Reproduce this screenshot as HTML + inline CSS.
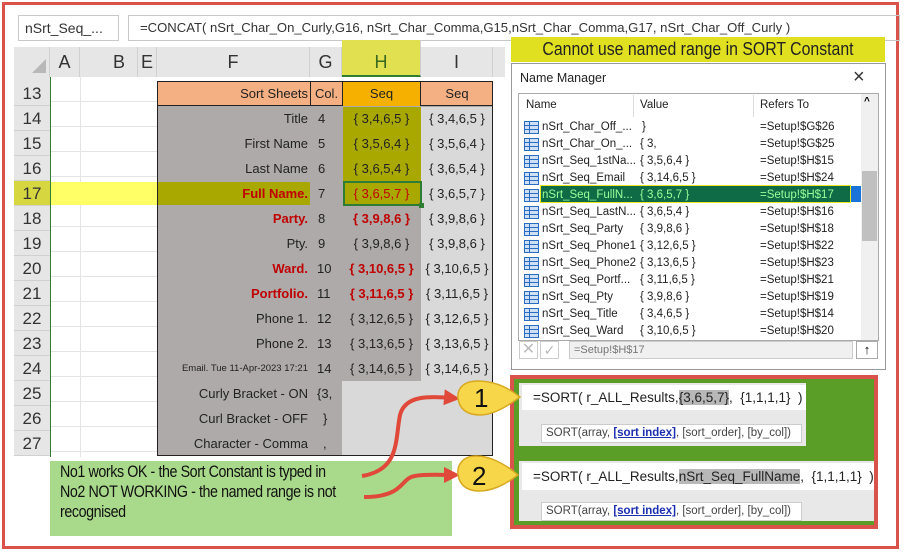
<!DOCTYPE html>
<html><head><meta charset="utf-8"><style>
*{box-sizing:border-box;margin:0;padding:0}
body{width:904px;height:553px;background:#fff;position:relative;overflow:hidden;font-family:"Liberation Sans",sans-serif}
.a{position:absolute}
.c{position:absolute;font-size:13px;color:#222;white-space:nowrap;line-height:25px}
.hd{position:absolute;top:47px;height:30px;font-size:18px;line-height:30px;text-align:center;color:#333;background:#e6e6e6;border-right:1px solid #d0d0d0}
.rn{position:absolute;left:14px;width:36px;height:25px;font-size:17px;line-height:25px;text-align:center;color:#333;background:#e6e6e6;border-bottom:1px solid #d0d0d0}
.nm{position:absolute;font-size:11.5px;color:#222;white-space:nowrap;line-height:17px}
.ic{position:absolute;left:524px;width:15px;height:13px;border:1px solid #2a6cc0;background:linear-gradient(#2a6cc0 0 0) 0 3px/100% 1px no-repeat,linear-gradient(#2a6cc0 0 0) 0 7px/100% 1px no-repeat,linear-gradient(90deg,transparent 4px,#2a6cc0 4px 5px,transparent 5px) ,#cfe0f5}
</style></head><body>
<div class="a" style="left:2px;top:2px;width:897px;height:547px;border:3px solid #d9534a"></div>

<div class="a" style="left:18px;top:15px;width:101px;height:26px;border:1px solid #c8c8c8;font-size:14px;line-height:24px;padding-left:6px;color:#333">nSrt_Seq_... <span style="font-size:8px;color:#777;margin-left:4px">▼</span></div>
<div class="a" style="left:128px;top:15px;width:772px;height:26px;border:1px solid #c8c8c8;font-size:13.1px;line-height:24px;padding-left:11px;color:#333;white-space:nowrap">=CONCAT( nSrt_Char_On_Curly,G16, nSrt_Char_Comma,G15,nSrt_Char_Comma,G17, nSrt_Char_Off_Curly )</div>

<div class="hd" style="left:14px;width:36px"><div class="a" style="right:3px;bottom:4px;width:0;height:0;border-left:14px solid transparent;border-bottom:14px solid #b8b8b8"></div></div>
<div class="hd" style="left:50px;width:30px">A</div>
<div class="hd" style="left:80px;width:58px;text-align:right;padding-right:12px">B</div>
<div class="hd" style="left:138px;width:19px">E</div>
<div class="hd" style="left:157px;width:153px">F</div>
<div class="hd" style="left:310px;width:32px">G</div>
<div class="hd" style="left:342px;width:79px;background:#e0e050;color:#3a6a20;top:40px;height:37px;line-height:44px;border-bottom:2px solid #2e7d32">H</div>
<div class="hd" style="left:421px;width:72px">I</div>
<div class="a" style="left:493px;top:47px;width:12px;height:30px;background:#e6e6e6"></div>

<div class="a" style="left:50px;top:77px;width:107px;height:380px;background:repeating-linear-gradient(transparent 0 24px,#e4e4e4 24px 25px)"></div>
<div class="a" style="left:80px;top:77px;width:1px;height:380px;background:#e4e4e4"></div>
<div class="a" style="left:50px;top:77px;width:1px;height:380px;background:#2e7d32"></div>

<div class="rn" style="top:81px">13</div><div class="rn" style="top:106px">14</div><div class="rn" style="top:131px">15</div><div class="rn" style="top:156px">16</div>
<div class="rn" style="top:181px;background:#d6d640">17</div><div class="rn" style="top:206px">18</div><div class="rn" style="top:231px">19</div><div class="rn" style="top:256px">20</div>
<div class="rn" style="top:281px">21</div><div class="rn" style="top:306px">22</div><div class="rn" style="top:331px">23</div><div class="rn" style="top:356px">24</div>
<div class="rn" style="top:381px">25</div><div class="rn" style="top:406px">26</div><div class="rn" style="top:431px">27</div>
<div class="a" style="left:14px;top:77px;width:36px;height:4px;background:#e6e6e6"></div>
<div class="a" style="left:51px;top:182px;width:106px;height:23px;background:#ffff66"></div>

<div class="a" style="left:157px;top:81px;width:336px;height:375px;background:#aeaaaa;border:1px solid #222"></div>
<div class="a" style="left:158px;top:82px;width:334px;height:24px;background:#f4b083;border-bottom:1px solid #222"></div>
<div class="a" style="left:310px;top:82px;width:1px;height:24px;background:#222"></div>
<div class="a" style="left:342px;top:82px;width:79px;height:24px;background:#f5b000;border-left:1px solid #222;border-right:1px solid #222"></div>
<div class="a" style="left:343px;top:107px;width:78px;height:98px;background:#a9a800"></div>
<div class="a" style="left:158px;top:182px;width:152px;height:23px;background:#a9a800"></div>
<div class="a" style="left:421px;top:107px;width:71px;height:348px;background:#d9d9d9"></div>
<div class="a" style="left:342px;top:381px;width:79px;height:74px;background:#d9d9d9"></div>
<div class="a" style="left:343px;top:181px;width:79px;height:25px;border:2px solid #2e7d32"></div>
<div class="a" style="left:419px;top:203px;width:5px;height:5px;background:#2e7d32"></div>

<div class="c" style="left:158px;width:150px;top:81px;text-align:right">Sort Sheets</div>
<div class="c" style="left:311px;width:31px;top:81px;text-align:center">Col.</div>
<div class="c" style="left:342px;width:79px;top:81px;text-align:center">Seq</div>
<div class="c" style="left:421px;width:72px;top:81px;text-align:center">Seq</div>

<div class="c" style="left:158px;width:150px;top:106px;text-align:right">Title</div>
<div class="c" style="left:158px;width:150px;top:131px;text-align:right">First Name</div>
<div class="c" style="left:158px;width:150px;top:156px;text-align:right">Last Name</div>
<div class="c" style="left:158px;width:150px;top:181px;text-align:right;color:#c00000;font-weight:bold">Full Name.</div>
<div class="c" style="left:158px;width:150px;top:206px;text-align:right;color:#c00000;font-weight:bold">Party.</div>
<div class="c" style="left:158px;width:150px;top:231px;text-align:right">Pty.</div>
<div class="c" style="left:158px;width:150px;top:256px;text-align:right;color:#c00000;font-weight:bold">Ward.</div>
<div class="c" style="left:158px;width:150px;top:281px;text-align:right;color:#c00000;font-weight:bold">Portfolio.</div>
<div class="c" style="left:158px;width:150px;top:306px;text-align:right">Phone 1.</div>
<div class="c" style="left:158px;width:150px;top:331px;text-align:right">Phone 2.</div>
<div class="c" style="left:158px;width:150px;top:356px;text-align:right;font-size:9.5px">Email. Tue 11-Apr-2023 17:21</div>
<div class="c" style="left:158px;width:150px;top:381px;text-align:right">Curly Bracket - ON</div>
<div class="c" style="left:158px;width:150px;top:406px;text-align:right">Curl Bracket - OFF</div>
<div class="c" style="left:158px;width:150px;top:431px;text-align:right">Character - Comma</div>
<div class="c" style="left:318px;top:106px">4</div><div class="c" style="left:318px;top:131px">5</div><div class="c" style="left:318px;top:156px">6</div>
<div class="c" style="left:318px;top:181px">7</div><div class="c" style="left:318px;top:206px">8</div><div class="c" style="left:318px;top:231px">9</div>
<div class="c" style="left:317px;top:256px">10</div><div class="c" style="left:317px;top:281px">11</div><div class="c" style="left:317px;top:306px">12</div>
<div class="c" style="left:317px;top:331px">13</div><div class="c" style="left:317px;top:356px">14</div>
<div class="c" style="left:317px;top:381px">{3,</div><div class="c" style="left:323px;top:406px">}</div><div class="c" style="left:323px;top:431px">,</div>
<div class="c" style="left:342px;width:79px;text-align:center;top:106px">{ 3,4,6,5 }</div>
<div class="c" style="left:342px;width:79px;text-align:center;top:131px">{ 3,5,6,4 }</div>
<div class="c" style="left:342px;width:79px;text-align:center;top:156px">{ 3,6,5,4 }</div>
<div class="c" style="left:342px;width:79px;text-align:center;top:181px;color:#c00000">{ 3,6,5,7 }</div>
<div class="c" style="left:342px;width:79px;text-align:center;top:206px;color:#c00000;font-weight:bold">{ 3,9,8,6 }</div>
<div class="c" style="left:342px;width:79px;text-align:center;top:231px">{ 3,9,8,6 }</div>
<div class="c" style="left:342px;width:79px;text-align:center;top:256px;color:#c00000;font-weight:bold">{ 3,10,6,5 }</div>
<div class="c" style="left:342px;width:79px;text-align:center;top:281px;color:#c00000;font-weight:bold">{ 3,11,6,5 }</div>
<div class="c" style="left:342px;width:79px;text-align:center;top:306px">{ 3,12,6,5 }</div>
<div class="c" style="left:342px;width:79px;text-align:center;top:331px">{ 3,13,6,5 }</div>
<div class="c" style="left:342px;width:79px;text-align:center;top:356px">{ 3,14,6,5 }</div>
<div class="c" style="left:421px;width:72px;text-align:center;top:106px">{ 3,4,6,5 }</div>
<div class="c" style="left:421px;width:72px;text-align:center;top:131px">{ 3,5,6,4 }</div>
<div class="c" style="left:421px;width:72px;text-align:center;top:156px">{ 3,6,5,4 }</div>
<div class="c" style="left:421px;width:72px;text-align:center;top:181px">{ 3,6,5,7 }</div>
<div class="c" style="left:421px;width:72px;text-align:center;top:206px">{ 3,9,8,6 }</div>
<div class="c" style="left:421px;width:72px;text-align:center;top:231px">{ 3,9,8,6 }</div>
<div class="c" style="left:421px;width:72px;text-align:center;top:256px">{ 3,10,6,5 }</div>
<div class="c" style="left:421px;width:72px;text-align:center;top:281px">{ 3,11,6,5 }</div>
<div class="c" style="left:421px;width:72px;text-align:center;top:306px">{ 3,12,6,5 }</div>
<div class="c" style="left:421px;width:72px;text-align:center;top:331px">{ 3,13,6,5 }</div>
<div class="c" style="left:421px;width:72px;text-align:center;top:356px">{ 3,14,6,5 }</div>

<div class="a" style="left:511px;top:37px;width:374px;height:25px;background:#e0e020"></div>
<div class="a" style="left:511px;top:37px;width:374px;height:25px;font-size:18px;line-height:25px;text-align:center;color:#222;transform:scaleX(0.88);white-space:nowrap">Cannot use named range in SORT Constant</div>

<div class="a" style="left:511px;top:63px;width:375px;height:307px;background:#fff;border:1px solid #999"></div>
<div class="a" style="left:520px;top:71px;font-size:12.5px;color:#222">Name Manager</div>
<div class="a" style="left:853px;top:66px;font-size:20px;color:#333">×</div>
<div class="a" style="left:518px;top:93px;width:361px;height:248px;border:1px solid #aaa;background:#fff"></div>
<div class="a" style="left:633px;top:95px;width:1px;height:22px;background:#ddd"></div>
<div class="a" style="left:753px;top:95px;width:1px;height:22px;background:#ddd"></div>
<div class="nm" style="left:526px;top:97px">Name</div>
<div class="nm" style="left:640px;top:97px">Value</div>
<div class="nm" style="left:760px;top:97px">Refers To</div>
<div class="a" style="left:861px;top:94px;width:17px;height:246px;background:#f0f0f0"></div>
<div class="a" style="left:862px;top:171px;width:15px;height:70px;background:#c0c0c0"></div>
<div class="a" style="left:864px;top:96px;font-size:10px;font-weight:bold">^</div>
<div class="a" style="left:540px;top:185px;width:311px;height:18px;background:#0f6b45;border:1px solid #e8e820"></div>
<div class="a" style="left:851px;top:186px;width:10px;height:16px;background:#1a73d9"></div>

<div class="ic" style="top:121px"></div><div class="nm" style="left:542px;top:119px">nSrt_Char_Off_...</div><div class="nm" style="left:642px;top:119px">}</div><div class="nm" style="left:760px;top:119px">=Setup!$G$26</div>
<div class="ic" style="top:138px"></div><div class="nm" style="left:542px;top:136px">nSrt_Char_On_...</div><div class="nm" style="left:640px;top:136px">{ 3,</div><div class="nm" style="left:760px;top:136px">=Setup!$G$25</div>
<div class="ic" style="top:155px"></div><div class="nm" style="left:542px;top:153px">nSrt_Seq_1stNa...</div><div class="nm" style="left:640px;top:153px">{ 3,5,6,4 }</div><div class="nm" style="left:760px;top:153px">=Setup!$H$15</div>
<div class="ic" style="top:172px"></div><div class="nm" style="left:542px;top:170px">nSrt_Seq_Email</div><div class="nm" style="left:640px;top:170px">{ 3,14,6,5 }</div><div class="nm" style="left:760px;top:170px">=Setup!$H$24</div>
<div class="ic" style="top:189px"></div><div class="nm" style="left:542px;top:187px;color:#9f9">nSrt_Seq_FullN...</div><div class="nm" style="left:640px;top:187px;color:#9f9">{ 3,6,5,7 }</div><div class="nm" style="left:760px;top:187px;color:#9f9">=Setup!$H$17</div>
<div class="ic" style="top:206px"></div><div class="nm" style="left:542px;top:204px">nSrt_Seq_LastN...</div><div class="nm" style="left:640px;top:204px">{ 3,6,5,4 }</div><div class="nm" style="left:760px;top:204px">=Setup!$H$16</div>
<div class="ic" style="top:223px"></div><div class="nm" style="left:542px;top:221px">nSrt_Seq_Party</div><div class="nm" style="left:640px;top:221px">{ 3,9,8,6 }</div><div class="nm" style="left:760px;top:221px">=Setup!$H$18</div>
<div class="ic" style="top:240px"></div><div class="nm" style="left:542px;top:238px">nSrt_Seq_Phone1</div><div class="nm" style="left:640px;top:238px">{ 3,12,6,5 }</div><div class="nm" style="left:760px;top:238px">=Setup!$H$22</div>
<div class="ic" style="top:257px"></div><div class="nm" style="left:542px;top:255px">nSrt_Seq_Phone2</div><div class="nm" style="left:640px;top:255px">{ 3,13,6,5 }</div><div class="nm" style="left:760px;top:255px">=Setup!$H$23</div>
<div class="ic" style="top:274px"></div><div class="nm" style="left:542px;top:272px">nSrt_Seq_Portf...</div><div class="nm" style="left:640px;top:272px">{ 3,11,6,5 }</div><div class="nm" style="left:760px;top:272px">=Setup!$H$21</div>
<div class="ic" style="top:291px"></div><div class="nm" style="left:542px;top:289px">nSrt_Seq_Pty</div><div class="nm" style="left:640px;top:289px">{ 3,9,8,6 }</div><div class="nm" style="left:760px;top:289px">=Setup!$H$19</div>
<div class="ic" style="top:308px"></div><div class="nm" style="left:542px;top:306px">nSrt_Seq_Title</div><div class="nm" style="left:640px;top:306px">{ 3,4,6,5 }</div><div class="nm" style="left:760px;top:306px">=Setup!$H$14</div>
<div class="ic" style="top:325px"></div><div class="nm" style="left:542px;top:323px">nSrt_Seq_Ward</div><div class="nm" style="left:640px;top:323px">{ 3,10,6,5 }</div><div class="nm" style="left:760px;top:323px">=Setup!$H$20</div>
<div class="a" style="left:519px;top:341px;width:19px;height:18px;border:1px solid #ccc;color:#bbb;font-size:16px;line-height:16px;text-align:center">✕</div>
<div class="a" style="left:540px;top:341px;width:19px;height:18px;border:1px solid #ccc;color:#bbb;font-size:14px;line-height:16px;text-align:center">✓</div>
<div class="a" style="left:569px;top:341px;width:284px;height:18px;background:#f0f0f0;border:1px solid #ccc;font-size:11px;line-height:16px;padding-left:4px;color:#777">=Setup!$H$17</div>
<div class="a" style="left:856px;top:341px;width:22px;height:18px;border:1px solid #aaa;font-size:13px;line-height:15px;text-align:center;font-weight:bold">↑</div>

<div class="a" style="left:510px;top:375px;width:368px;height:154px;background:#5a9e28;border:4px solid #d9534a"></div>
<div class="a" style="left:519px;top:383px;width:287px;height:63px;background:#e8e8e8"></div>
<div class="a" style="left:522px;top:385px;width:284px;height:25px;background:#fff;font-size:13.5px;line-height:25px;padding-left:11px;white-space:nowrap;color:#222">=SORT( r_ALL_Results,<span style="background:#b8b8b8">{3,6,5,7}</span>,&nbsp; {1,1,1,1}&nbsp; )</div>
<div class="a" style="left:541px;top:424px;width:261px;height:19px;background:#fff;border:1px solid #ccc;font-size:11.5px;line-height:17px;padding-left:4px;white-space:nowrap;color:#444">SORT(array, <b style="color:#1a2eb0;text-decoration:underline">[sort index]</b>, [sort_order], [by_col])</div>
<div class="a" style="left:519px;top:461px;width:355px;height:60px;background:#e8e8e8"></div>
<div class="a" style="left:522px;top:463px;width:352px;height:27px;background:#fff;font-size:13.5px;line-height:27px;padding-left:11px;white-space:nowrap;color:#222">=SORT( r_ALL_Results,<span style="background:#b8b8b8">nSrt_Seq_FullName</span>,&nbsp; {1,1,1,1}&nbsp; )</div>
<div class="a" style="left:541px;top:502px;width:261px;height:19px;background:#fff;border:1px solid #ccc;font-size:11.5px;line-height:17px;padding-left:4px;white-space:nowrap;color:#444">SORT(array, <b style="color:#1a2eb0;text-decoration:underline">[sort index]</b>, [sort_order], [by_col])</div>

<div class="a" style="left:50px;top:461px;width:402px;height:75px;background:#a9d98a"></div>
<div class="a" style="left:60px;top:462px;width:400px;font-size:17px;line-height:20px;color:#111;letter-spacing:-0.5px;transform:scaleX(0.84);transform-origin:left top;white-space:nowrap">No1 works OK - the Sort Constant is typed in<br>No2 NOT WORKING - the named range is not<br>recognised</div>

<svg class="a" style="left:0;top:0" width="904" height="553">
<defs><marker id="m" markerWidth="4" markerHeight="4" refX="2" refY="2" orient="auto"><path d="M0,0 L4,2 L0,4 z" fill="#e0483a"/></marker></defs>
<path d="M362,476 C400,470 395,440 400,415 C405,395 430,396 452,398" stroke="#e0483a" stroke-width="4" fill="none" marker-end="url(#m)"/>
<path d="M364,497 C405,497 400,478 415,476 C425,474 440,475 452,475" stroke="#e0483a" stroke-width="4" fill="none" marker-end="url(#m)"/>
<path d="M520,397 C505,385 490,381 478,381 C462,381 457,390 458,398 C459,408 466,415 480,415 C492,415 505,408 520,397 z" fill="#f7d64a" stroke="#d8a820" stroke-width="1.5"/>
<path d="M518,475 C503,462 488,456 476,456 C462,456 457,466 458,474 C459,484 466,491 479,491 C491,491 503,486 518,475 z" fill="#f7d64a" stroke="#d8a820" stroke-width="1.5"/>
<text x="474" y="407" font-family="Liberation Sans" font-size="26" fill="#111">1</text>
<text x="472" y="485" font-family="Liberation Sans" font-size="26" fill="#111">2</text>
</svg>
</body></html>
